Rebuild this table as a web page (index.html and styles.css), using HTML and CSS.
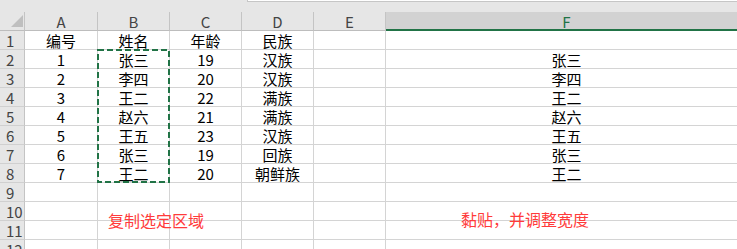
FILE: index.html
```html
<!DOCTYPE html>
<html lang="zh-CN">
<head>
<meta charset="utf-8">
<title>Sheet1</title>
<link rel="stylesheet" href="styles.css">
</head>
<body>
<div class="topbar"><div class="formula-box"></div></div>
<div class="sheet">
  <div class="grid">
    <div class="corner">
      <svg width="24" height="18" viewBox="0 0 24 18"><polygon points="23,3 23,15 11,15" fill="#bfbfbf"/></svg>
    </div>
    <div class="col-head">A</div>
    <div class="col-head">B</div>
    <div class="col-head">C</div>
    <div class="col-head">D</div>
    <div class="col-head">E</div>
    <div class="col-head col-selected">F</div>

    <div class="row-head">1</div><div class="cell">编号</div><div class="cell">姓名</div><div class="cell">年龄</div><div class="cell">民族</div><div class="cell"></div><div class="cell"></div>
    <div class="row-head">2</div><div class="cell">1</div><div class="cell">张三</div><div class="cell">19</div><div class="cell">汉族</div><div class="cell"></div><div class="cell">张三</div>
    <div class="row-head">3</div><div class="cell">2</div><div class="cell">李四</div><div class="cell">20</div><div class="cell">汉族</div><div class="cell"></div><div class="cell">李四</div>
    <div class="row-head">4</div><div class="cell">3</div><div class="cell">王二</div><div class="cell">22</div><div class="cell">满族</div><div class="cell"></div><div class="cell">王二</div>
    <div class="row-head">5</div><div class="cell">4</div><div class="cell">赵六</div><div class="cell">21</div><div class="cell">满族</div><div class="cell"></div><div class="cell">赵六</div>
    <div class="row-head">6</div><div class="cell">5</div><div class="cell">王五</div><div class="cell">23</div><div class="cell">汉族</div><div class="cell"></div><div class="cell">王五</div>
    <div class="row-head">7</div><div class="cell">6</div><div class="cell">张三</div><div class="cell">19</div><div class="cell">回族</div><div class="cell"></div><div class="cell">张三</div>
    <div class="row-head">8</div><div class="cell">7</div><div class="cell">王二</div><div class="cell">20</div><div class="cell">朝鲜族</div><div class="cell"></div><div class="cell">王二</div>
    <div class="row-head">9</div><div class="cell"></div><div class="cell"></div><div class="cell"></div><div class="cell"></div><div class="cell"></div><div class="cell"></div>
    <div class="row-head">10</div><div class="cell"></div><div class="cell"></div><div class="cell"></div><div class="cell"></div><div class="cell"></div><div class="cell"></div>
    <div class="row-head">11</div><div class="cell"></div><div class="cell"></div><div class="cell"></div><div class="cell"></div><div class="cell"></div><div class="cell"></div>
    <div class="row-head">12</div><div class="cell"></div><div class="cell"></div><div class="cell"></div><div class="cell"></div><div class="cell"></div><div class="cell"></div>
  </div>

  <!-- copy marquee around B2:B8 -->
  <svg class="marquee" width="73" height="134" viewBox="0 0 73 134">
    <rect x="1" y="1" width="71" height="132" fill="none" stroke="#217346" stroke-width="2" stroke-dasharray="6 3"/>
  </svg>

  <div class="note note-copy">复制选定区域</div>
  <div class="note note-paste">黏贴，并调整宽度</div>
</div>
</body>
</html>
```

FILE: styles.css
```css
html, body {
  margin: 0;
  padding: 0;
  background: #ffffff;
}

body {
  width: 737px;
  height: 249px;
  overflow: hidden;
  font-family: "Noto Sans CJK SC", "Noto Sans", sans-serif;
}

/* strip above the column headers, with the edge of the formula box */
.topbar {
  height: 12px;
  background: #e6e6e6;
  display: flex;
}

.formula-box {
  margin-left: 247px;
  flex: 1;
  height: 1px;
  background: #ffffff;
  border-left: 1px solid #c6c6c6;
  border-bottom: 1px solid #c6c6c6;
}

.sheet {
  position: relative;
  height: 237px;
  overflow: hidden;
}

.grid {
  display: grid;
  grid-template-columns: 25px 73px 72px 72px 72px 72px 362px;
  grid-auto-rows: 19px;
  width: 748px;
}

.grid > div {
  box-sizing: border-box;
}

.corner {
  background: #e6e6e6;
  border-right: 1px solid #c4c4c4;
  border-bottom: 1px solid #bdbdbd;
}

.corner svg {
  display: block;
}

.col-head {
  background: #e6e6e6;
  border-right: 1px solid #c4c4c4;
  border-bottom: 1px solid #bdbdbd;
  color: #444444;
  font-size: 15px;
  line-height: 18px;
  text-align: center;
  padding-top: 1px;
}

.col-selected {
  background: #d2d2d2;
  color: #217346;
  box-shadow: inset 0 -1px 0 #217346;
  border-bottom-color: #217346;
}

.row-head {
  background: #e6e6e6;
  border-right: 1px solid #c4c4c4;
  border-bottom: 1px solid #d0d0d0;
  color: #444444;
  font-size: 15px;
  line-height: 18px;
  padding-left: 6px;
  padding-top: 1px;
}

.cell {
  border-right: 1px solid #d4d4d4;
  border-bottom: 1px solid #d4d4d4;
  color: #000000;
  font-size: 15px;
  line-height: 18px;
  text-align: center;
  padding-top: 1px;
  white-space: nowrap;
  overflow: hidden;
}

/* dashed copy outline drawn over the copied range */
.marquee {
  position: absolute;
  left: 97px;
  top: 37px;
  display: block;
}

/* floating text boxes */
.note {
  position: absolute;
  color: #ff3b3b;
  font-size: 16px;
  line-height: 20px;
  white-space: nowrap;
}

.note-copy {
  left: 108px;
  top: 198px;
}

.note-paste {
  left: 461px;
  top: 197px;
}
```
